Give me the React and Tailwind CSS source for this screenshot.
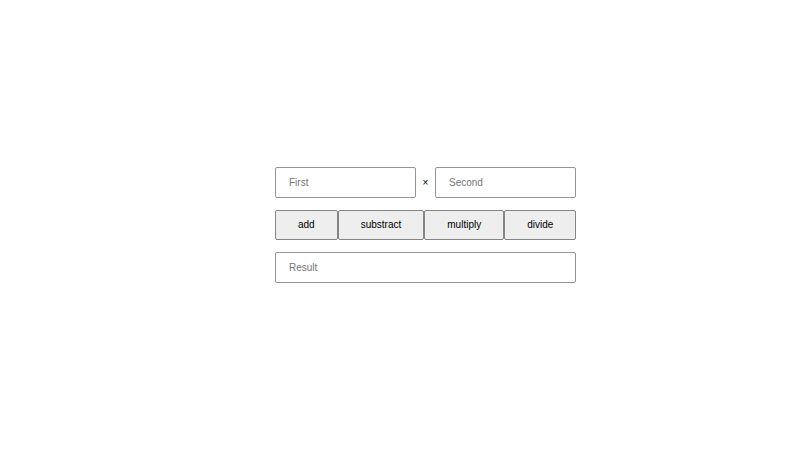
import React, { useState } from 'react';

const inputClass =
  'h-[31px] min-w-0 rounded-[2px] border border-[#959595] bg-white px-[13px] text-[10px] text-black placeholder:text-[#757575]';

const operations = [
  { name: 'add', run: (a, b) => a + b },
  { name: 'substract', run: (a, b) => a - b },
  { name: 'multiply', run: (a, b) => a * b },
  { name: 'divide', run: (a, b) => a / b },
];

const App = () => {
  const [first, setFirst] = useState('');
  const [second, setSecond] = useState('');
  const [result, setResult] = useState('');

  return (
    <main
      className="flex min-h-screen items-center justify-center bg-white pl-[51px] font-['Liberation_Sans',Arial,sans-serif] text-[10px] text-black"
    >
      <div className="flex w-full max-w-[301px] flex-col gap-3">
        <div className="flex items-center">
          <input
            className={`${inputClass} flex-1`}
            placeholder="First"
            aria-label="First"
            value={first}
            onChange={(e) => setFirst(e.target.value)}
          />
          <span className="w-[19px] text-center">×</span>
          <input
            className={`${inputClass} flex-1`}
            placeholder="Second"
            aria-label="Second"
            value={second}
            onChange={(e) => setSecond(e.target.value)}
          />
        </div>
        <div className="flex">
          {operations.map((op) => (
            <button
              key={op.name}
              type="button"
              className="h-[30px] flex-auto rounded-[2px] border border-[#858585] bg-[#eeeeee] px-[22px] leading-3"
              onClick={() => setResult(String(op.run(Number(first), Number(second))))}
            >
              {op.name}
            </button>
          ))}
        </div>
        <input className={inputClass} placeholder="Result" aria-label="Result" value={result} readOnly />
      </div>
    </main>
  );
};

export default App;
